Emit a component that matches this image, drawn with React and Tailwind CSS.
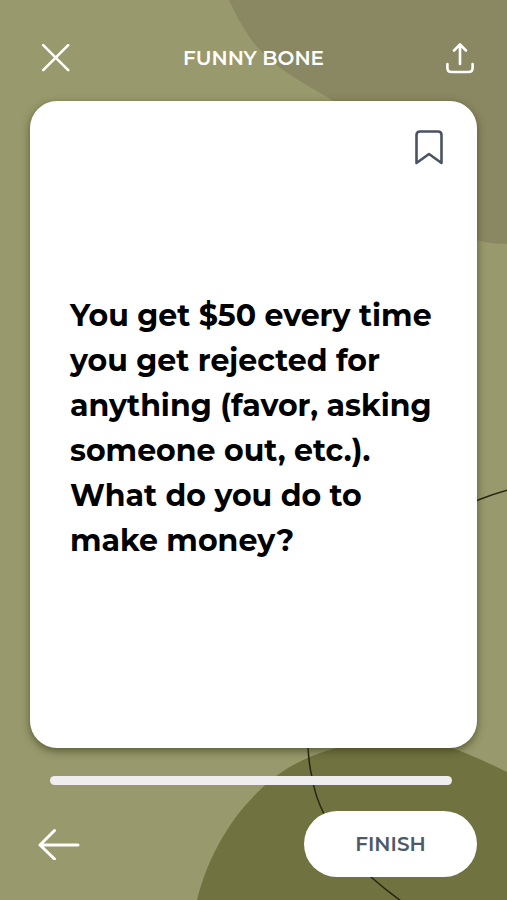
import { useState } from 'react';

const lines = [
  'You get $50 every time',
  'you get rejected for',
  'anything (favor, asking',
  'someone out, etc.).',
  'What do you do to',
  'make money?'
];

const Background = () => (
  <svg
    className="absolute inset-0 -z-10 size-full"
    viewBox="0 0 507 900"
    preserveAspectRatio="xMidYMid slice"
    aria-hidden="true"
  >
    <path
      fill="#8a8862"
      d="M229 0C236 15 243 28 253 42C274 68 302 82 332 100C380 128 400 180 430 215C445 231 460 236 477 240C487 243 497 244 507 244V0Z"
    />
    <path
      fill="#707340"
      d="M197 900C207 860 227 824 253 797C275 773 301 758 333 749C372 740 420 739 455 749C473 756 491 764 507 772V900Z"
    />
    <path
      fill="none"
      stroke="#24260f"
      strokeWidth="1.5"
      d="M508 490C497 493 488 496 478 500C380 535 308 640 308 749C309 758 309 766 312 777C314 790 318 802 324 814C334 838 351 860 371 877C380 885 390 893 401 901"
    />
  </svg>
);

const App = () => {
  const [saved, setSaved] = useState(false);

  return (
    <div className="relative isolate flex min-h-screen flex-col overflow-hidden bg-[#98996c] px-[30px] pb-[23px] font-['Montserrat','Inter',sans-serif]">
      <Background />

      <header className="grid h-[101px] grid-cols-[1fr_auto_1fr] items-center pt-[14px] text-white">
        <button type="button" aria-label="Close" className="ml-3 justify-self-start">
          <svg className="size-7" viewBox="0 0 28 28" fill="none" stroke="currentColor" strokeWidth="2.6" strokeLinecap="round">
            <path d="M1.200 1.200 26.200 26.200M26.200 1.200 1.200 26.200" />
          </svg>
        </button>
        <h1 className="text-xl font-semibold">FUNNY BONE</h1>
        <button type="button" aria-label="Share" className="mr-[3px] justify-self-end">
          <svg className="h-8 w-7" viewBox="0 0 28 32" fill="none" stroke="currentColor" strokeWidth="2.6" strokeLinecap="round" strokeLinejoin="round">
            <path d="M14 22V3M8 8.500 14 2.500 20 8.500" />
            <path d="M1.400 22V26Q1.400 30 5.400 30H22.600Q26.600 30 26.600 26V22" />
          </svg>
        </button>
      </header>

      <main className="relative flex flex-1 flex-col justify-center rounded-[27px] bg-white px-10 shadow-[0_3px_9px_rgba(50,50,20,0.6)]">
        <button
          type="button"
          aria-label="Bookmark"
          aria-pressed={saved}
          onClick={() => setSaved(!saved)}
          className="absolute top-7 right-8 text-[#4b5262]"
        >
          <svg className="h-9 w-8" viewBox="0 0 32 36" fill={saved ? 'currentColor' : 'none'} stroke="currentColor" strokeWidth="2.6" strokeLinejoin="round">
            <path d="M3.500 34V6Q3.500 2.500 7 2.500H25Q28.500 2.500 28.500 6V34L16 25Z" />
          </svg>
        </button>
        <p className="pt-1.5 text-[30px] leading-[45px] font-bold whitespace-nowrap text-black">
          {lines.map((line) => (
            <span key={line} className="block">{line}</span>
          ))}
        </p>
      </main>

      <div
        role="progressbar"
        aria-label="Cards completed"
        aria-valuenow={100}
        className="mt-7 mr-[25px] ml-5 h-[9px] rounded-full bg-[#efedee]"
      />

      <footer className="mt-[26px] flex items-center justify-between pl-2">
        <button type="button" aria-label="Back" className="text-white">
          <svg className="h-8 w-[42px]" viewBox="0 0 42 32" fill="none" stroke="currentColor" strokeWidth="3" strokeLinecap="round" strokeLinejoin="round">
            <path d="M40 17H2M16.500 2.500 2 17 16.500 31" />
          </svg>
        </button>
        <button type="button" className="h-[66px] w-[173px] rounded-full bg-white text-xl font-semibold text-[#4e5968]">
          FINISH
        </button>
      </footer>
    </div>
  );
};

export default App;
